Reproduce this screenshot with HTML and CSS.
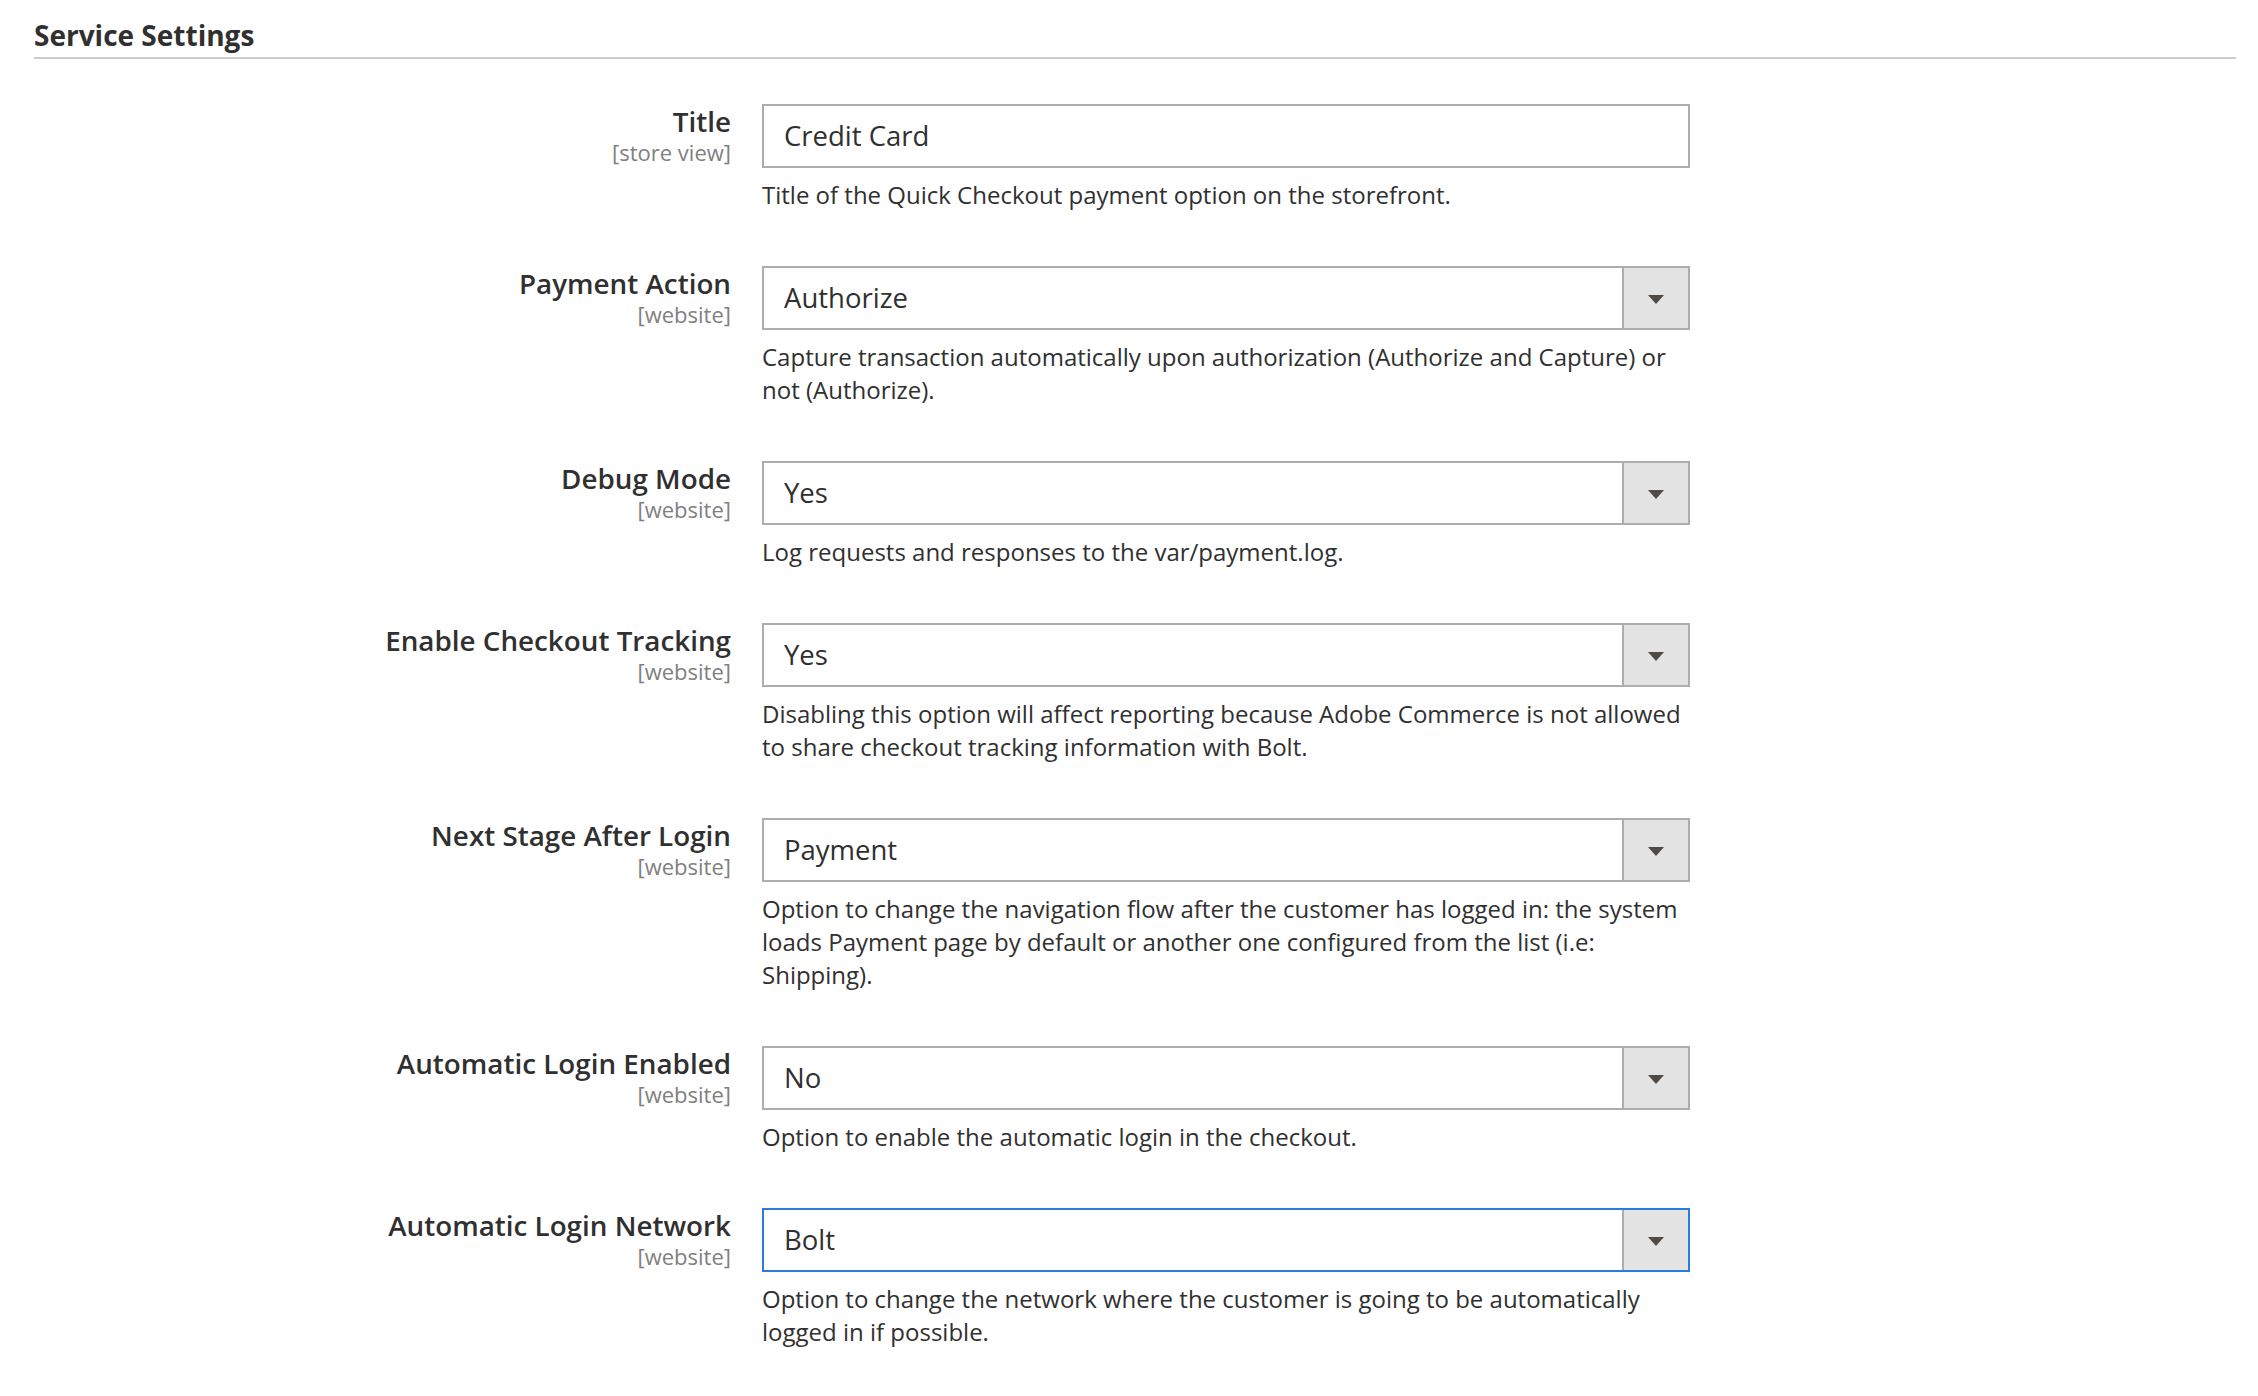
FILE: index.html
```html
<!DOCTYPE html>
<html lang="en">
<head>
<meta charset="utf-8">
<title>Service Settings</title>
<link rel="stylesheet" href="styles.css">
</head>
<body>
<div class="page">
  <h2 class="section-title">Service Settings</h2>
  <div class="form">
    <div class="row">
      <div class="label"><span class="name">Title</span><span class="scope">[store view]</span></div>
      <div class="control">
        <div class="field"><span class="value">Credit Card</span></div>
        <p class="note">Title of the Quick Checkout payment option on the storefront.</p>
      </div>
    </div>
    <div class="row">
      <div class="label"><span class="name">Payment Action</span><span class="scope">[website]</span></div>
      <div class="control">
        <div class="field select"><span class="value">Authorize</span><span class="arrow"></span></div>
        <p class="note">Capture transaction automatically upon authorization (Authorize and Capture) or not (Authorize).</p>
      </div>
    </div>
    <div class="row">
      <div class="label"><span class="name">Debug Mode</span><span class="scope">[website]</span></div>
      <div class="control">
        <div class="field select"><span class="value">Yes</span><span class="arrow"></span></div>
        <p class="note">Log requests and responses to the var/payment.log.</p>
      </div>
    </div>
    <div class="row">
      <div class="label"><span class="name">Enable Checkout Tracking</span><span class="scope">[website]</span></div>
      <div class="control">
        <div class="field select"><span class="value">Yes</span><span class="arrow"></span></div>
        <p class="note">Disabling this option will affect reporting because Adobe Commerce is not allowed to share checkout tracking information with Bolt.</p>
      </div>
    </div>
    <div class="row">
      <div class="label"><span class="name">Next Stage After Login</span><span class="scope">[website]</span></div>
      <div class="control">
        <div class="field select"><span class="value">Payment</span><span class="arrow"></span></div>
        <p class="note">Option to change the navigation flow after the customer has logged in: the system loads Payment page by default or another one configured from the list (i.e: Shipping).</p>
      </div>
    </div>
    <div class="row">
      <div class="label"><span class="name">Automatic Login Enabled</span><span class="scope">[website]</span></div>
      <div class="control">
        <div class="field select"><span class="value">No</span><span class="arrow"></span></div>
        <p class="note">Option to enable the automatic login in the checkout.</p>
      </div>
    </div>
    <div class="row">
      <div class="label"><span class="name">Automatic Login Network</span><span class="scope">[website]</span></div>
      <div class="control">
        <div class="field select focused"><span class="value">Bolt</span><span class="arrow"></span></div>
        <p class="note">Option to change the network where the customer is going to be automatically logged in if possible.</p>
      </div>
    </div>
  </div>
</div>
</body>
</html>
```
FILE: styles.css
```css
* { box-sizing: border-box; }
html, body { margin: 0; padding: 0; background: #ffffff; }
body {
  font-family: "Open Sans", "Liberation Sans", sans-serif;
  color: #303030;
}
.page {
  padding: 0 22px 0 34px;
}
.section-title {
  margin: 0;
  padding: 18px 0 5px 0;
  font-size: 28px;
  line-height: 34px;
  font-weight: 700;
  color: #303030;
  border-bottom: 2px solid #cccccc;
}
.form {
  padding-top: 45px;
}
.row {
  display: grid;
  grid-template-columns: 697px 928px;
  column-gap: 31px;
  margin-bottom: 55px;
}
.label {
  display: flex;
  flex-direction: column;
  align-items: flex-end;
  text-align: right;
  padding-top: 1px;
}
.name {
  font-size: 27.8px;
  line-height: 32px;
  font-weight: 600;
  color: #303030;
}
.scope {
  font-size: 22px;
  line-height: 30px;
  color: #808080;
}
.field {
  height: 64px;
  border: 2px solid #adadad;
  background: #ffffff;
  display: flex;
  align-items: center;
  padding-left: 20px;
  padding-bottom: 1px;
}
.field .value {
  flex: 1;
  font-size: 27.5px;
  color: #303030;
}
.select {
  padding-right: 0;
}
.arrow {
  align-self: stretch;
  width: 66px;
  margin-bottom: -1px;
  background: #e3e3e3;
  border-left: 2px solid #adadad;
  display: flex;
  align-items: center;
  justify-content: center;
}
.arrow::after {
  content: "";
  width: 0;
  height: 0;
  border-left: 8px solid transparent;
  border-right: 8px solid transparent;
  border-top: 9px solid #514943;
  margin-top: 3px;
}
.focused {
  border-color: #2c7bd4;
}
.note {
  margin: 10px 0 0 0;
  font-size: 24px;
  line-height: 33px;
  color: #303030;
}
```
